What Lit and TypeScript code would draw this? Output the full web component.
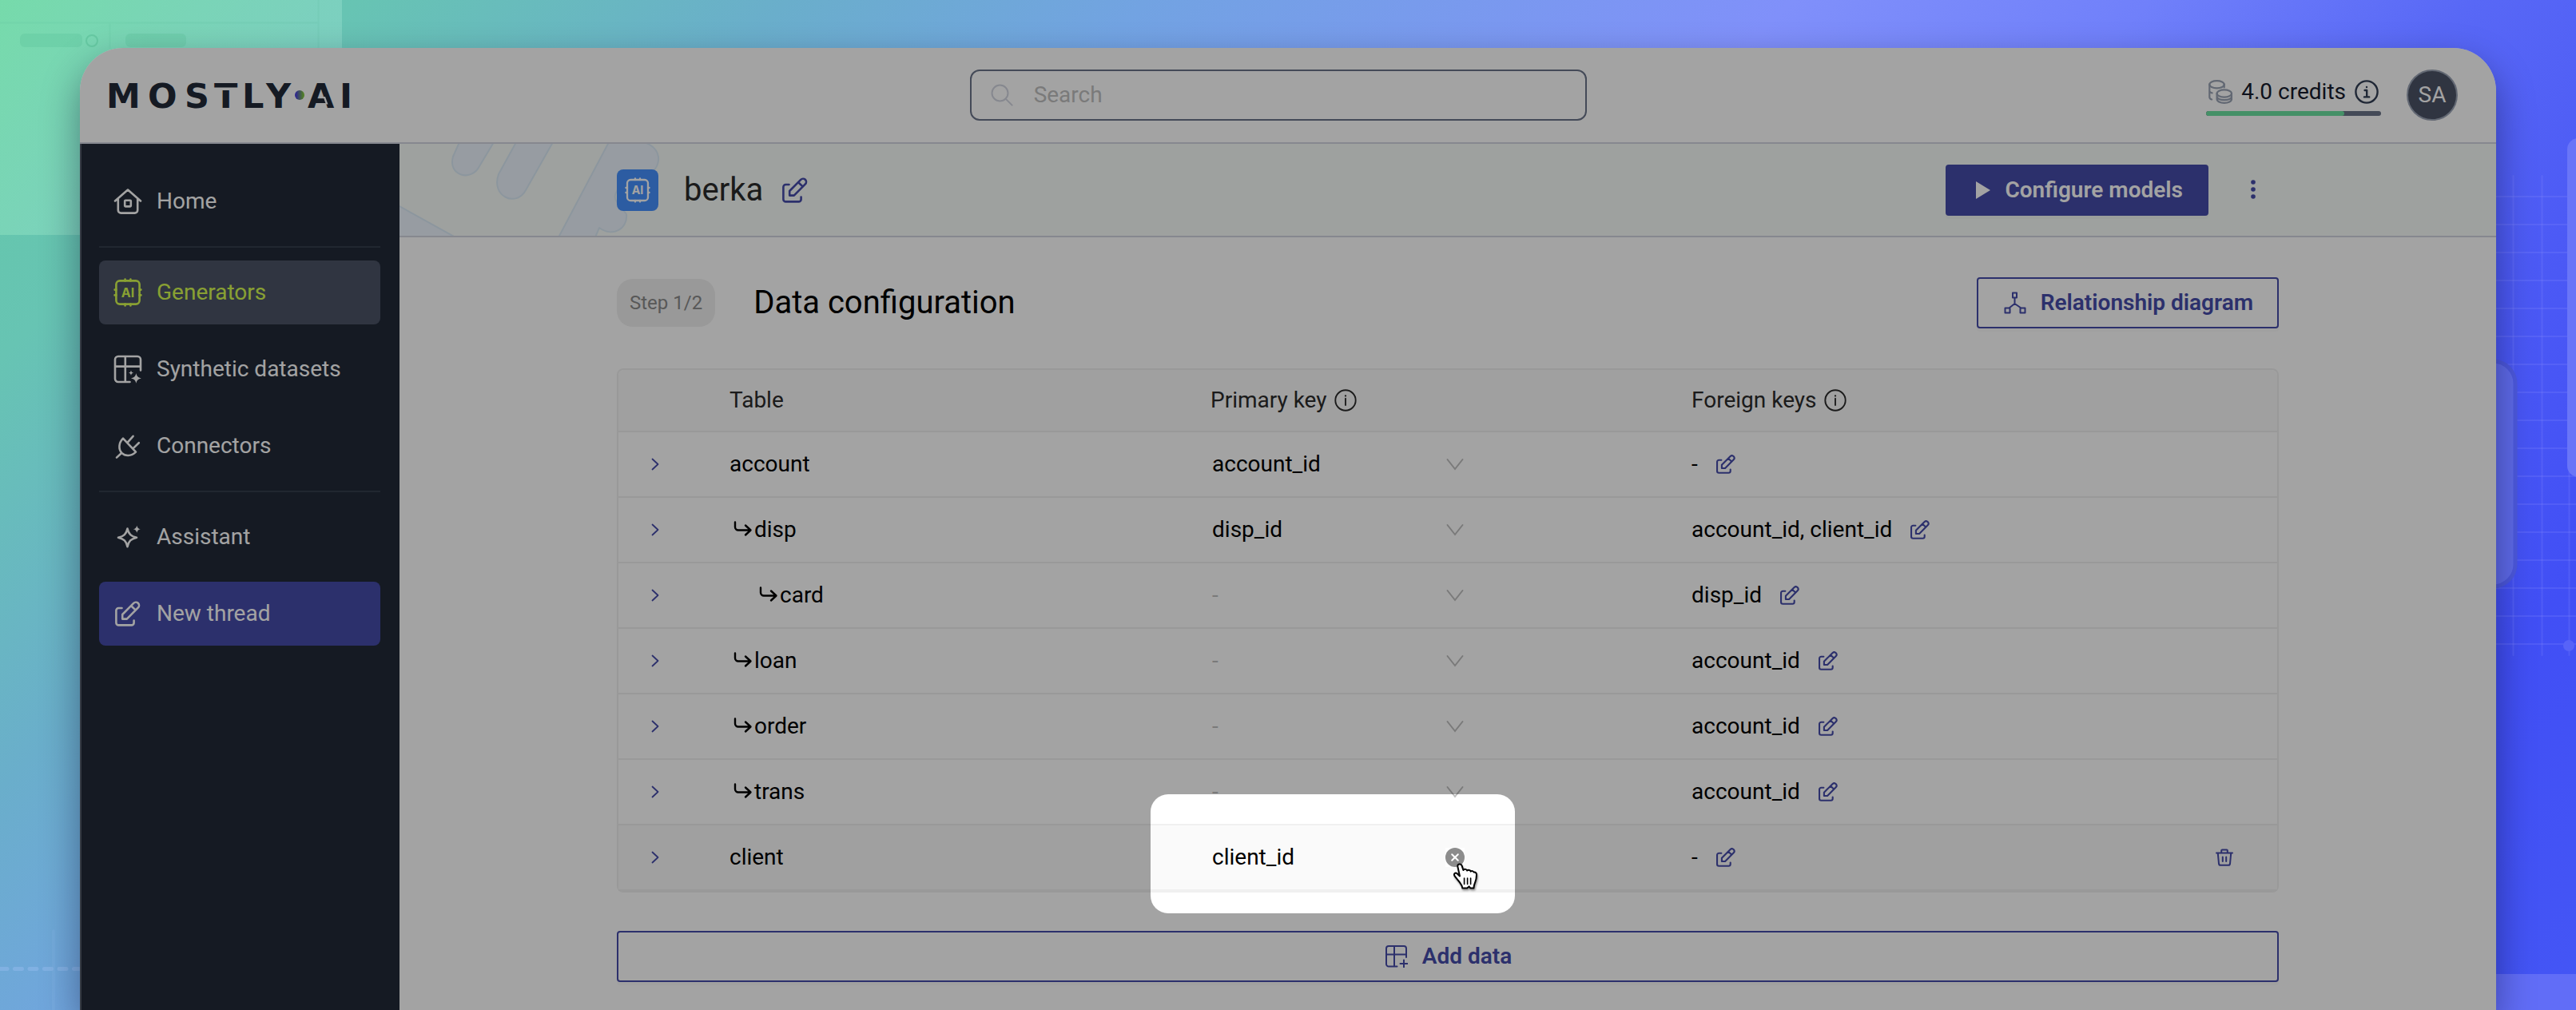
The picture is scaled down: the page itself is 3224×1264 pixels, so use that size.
import { LitElement, html, css, nothing } from "lit";
import { customElement, state } from "lit/decorators.js";

interface Row {
  name: string;
  level: number;
  primary: string;
  foreign: string;
}

const ROWS: Row[] = [
  { name: "account", level: 0, primary: "account_id", foreign: "-" },
  { name: "disp", level: 1, primary: "disp_id", foreign: "account_id, client_id" },
  { name: "card", level: 2, primary: "-", foreign: "disp_id" },
  { name: "loan", level: 1, primary: "-", foreign: "account_id" },
  { name: "order", level: 1, primary: "-", foreign: "account_id" },
  { name: "trans", level: 1, primary: "-", foreign: "account_id" },
  { name: "client", level: 0, primary: "client_id", foreign: "-" },
];

const iconHome = () => html`<svg class="i36" viewBox="0 0 36 36" aria-hidden="true">
  <path d="M2 17.5 18 3.5l16 14M5.8 15v14a3.6 3.6 0 0 0 3.6 3.6h17.2a3.6 3.6 0 0 0 3.6-3.6V15" />
  <rect x="14.2" y="16.8" width="7.6" height="7.6" rx="0.8" />
</svg>`;

const iconChip = () => html`<svg class="i36 chip" viewBox="0 0 36 36" aria-hidden="true">
  <rect x="3.4" y="3.4" width="29.2" height="29.2" rx="4.6" />
  <path d="M14.6 3.4V1.6M21.4 3.4V1.6M14.6 34.4v-1.8M21.4 34.4v-1.8M3.4 14.6H1.6M3.4 21.4H1.6M34.4 14.6h-1.8M34.4 21.4h-1.8" />
  <text x="18" y="24" text-anchor="middle">AI</text>
</svg>`;

const iconDatasets = () => html`<svg class="i36" viewBox="0 0 36 36" aria-hidden="true">
  <path d="M20.5 34H6a4 4 0 0 1-4-4V6a4 4 0 0 1 4-4h24a4 4 0 0 1 4 4v13.5M2 14.6h32M14.8 2v32" />
  <path class="solid" d="M28.4 23c.9 4 2.2 5.400 6.400 6.400-4.200 1-5.500 2.400-6.400 6.400-.9-4-2.200-5.400-6.400-6.400 4.200-1 5.500-2.400 6.400-6.400zM22 19.400c.5 2.100 1.200 2.700 3.200 3.200-2 .5-2.700 1.200-3.200 3.200-.5-2-1.200-2.700-3.200-3.200 2-.5 2.700-1.100 3.200-3.200z" />
</svg>`;

const iconPlug = () => html`<svg class="i36" viewBox="0 0 36 36" aria-hidden="true">
  <path d="M4 32.600l5.800-5.400M12 8.600 28 25.600C22 31.200 14.800 31.200 10.400 26.800 6 22.200 6.400 14.200 12 8.600zM18.200 13.200l6.400-7.400M25.200 20.600l6.600-6.400" />
</svg>`;

const iconSparkle = () => html`<svg class="i36" viewBox="0 0 36 36" aria-hidden="true">
  <path d="M17.500 7.500c1.600 7 4.300 9.700 11.500 11.300-7.200 1.600-9.900 4.300-11.500 11.400-1.600-7.100-4.300-9.800-11.500-11.400 7.200-1.600 9.900-4.300 11.500-11.300z" />
  <path class="solid" d="M29.300 3.800c.7 2.900 1.700 3.900 4.500 4.500-2.800.7-3.800 1.700-4.500 4.500-.7-2.800-1.700-3.800-4.500-4.500 2.800-.6 3.800-1.600 4.500-4.500z" />
</svg>`;

const iconEdit = (cls: string) => html`<svg class=${cls} viewBox="0 0 32 32" aria-hidden="true">
  <path d="M8.500 9H4.400a3 3 0 0 0-3 3v15.400a3 3 0 0 0 3 3h16.200a3 3 0 0 0 3-3V24.600" />
  <path d="M9.200 22.600v-5.600L23.200 2.900a3.900 3.900 0 0 1 5.700 5.500L14.800 22.600zM20.200 6.200l5.600 5.400" />
</svg>`;

const iconInfo = (cls: string) => html`<svg class=${cls} viewBox="0 0 30 30" aria-hidden="true">
  <circle cx="15" cy="15" r="13.600" />
  <path d="M12.600 13h2.600v8M12 21.400h6.200" class="serif" />
  <path d="M15 12.600v8.800" class="plain" />
  <circle class="solid" cx="15" cy="9" r="1.200" />
</svg>`;

const iconTableAdd = () => html`<svg class="i28" viewBox="0 0 28 28" aria-hidden="true">
  <path d="M14.500 26.500H4a3 3 0 0 1-3-3V4a3 3 0 0 1 3-3h19a3 3 0 0 1 3 3v11M1 11.500h25M11 1v25.500M23 18.500v9M18.500 23h9" />
</svg>`;

const iconDiagram = () => html`<svg class="i28" viewBox="0 0 28 28" aria-hidden="true">
  <path d="M11 1.500h5v6h-5zM1.500 20.500h6v6h-6zM20.500 20.500h6v6h-6zM13.500 7.500V15M13.500 15l-7 5.500M13.500 15l8 5.500" />
</svg>`;

const iconTrash = () => html`<svg class="trash" viewBox="0 0 24 24" aria-hidden="true">
  <path d="M2 6.500h20M8.200 6.200V3.400a1 1 0 0 1 1-1h5.600a1 1 0 0 1 1 1v2.800M3.800 6.800l1.200 13a2.200 2.200 0 0 0 2.200 2h9.600a2.200 2.200 0 0 0 2.200-2l1.200-13M9.800 11.500v5.500M14.200 11.500v5.500" />
</svg>`;

@customElement("app-root")
export class AppRoot extends LitElement {
  static styles = css`
    :host {
      display: block;
      font-family: Roboto, "Liberation Sans", sans-serif;
      font-size: 28px;
      line-height: 40px;
      color: #000;
    }
    * {
      box-sizing: border-box;
    }
    button,
    input,
    select {
      font: inherit;
      color: inherit;
      background: none;
      border: 0;
      margin: 0;
      padding: 0;
    }
    a {
      color: inherit;
      text-decoration: none;
    }
    svg {
      display: block;
      flex: none;
      fill: none;
      stroke: currentColor;
      stroke-width: 2;
      stroke-linejoin: round;
      stroke-linecap: round;
    }
    .solid {
      fill: currentColor;
      stroke: none;
    }
    .i36 {
      width: 36px;
      height: 36px;
      stroke-width: 2.6;
    }
    .i32 {
      width: 32px;
      height: 32px;
      stroke-width: 2.6;
    }
    .i28 {
      width: 28px;
      height: 28px;
    }
    .i24,
    .trash {
      width: 24px;
      height: 24px;
    }
    .i24 {
      stroke-width: 2.8;
    }
    .chip text {
      fill: currentColor;
      stroke: none;
      font: 700 16px Inter, sans-serif;
    }
    .page {
      position: relative;
      display: flex;
      flex-direction: column;
      min-height: 100vh;
      padding: 60px 100px 0;
      overflow: hidden;
      background: linear-gradient(
        135deg,
        #63c9a6 0%,
        #67c4b3 10%,
        #6aaecb 22%,
        #72a3e2 32%,
        #8090fa 50%,
        #7080fa 60%,
        #5868f6 69%,
        #4c5af5 78%,
        #414ff5 88%,
        #4456f5 100%
      );
    }
    .deco-left {
      position: absolute;
      left: 0;
      top: 0;
      width: 430px;
      height: 100%;
      stroke: none;
    }
    .deco-right {
      position: absolute;
      right: 0;
      top: 0;
      width: 120px;
      height: 100%;
    }
    .window {
      position: relative;
      z-index: 1;
      flex: 1;
      display: flex;
      flex-direction: column;
      overflow: hidden;
      border-radius: 54px 54px 0 0;
      background: #fff;
      box-shadow: 0 20px 48px rgba(0, 0, 30, 0.4);
    }
    .topbar {
      display: flex;
      align-items: center;
      justify-content: space-between;
      height: 120px;
      padding: 0 48px 0 32px;
      border-bottom: 2px solid #d2d5e0;
    }
    .logo {
      width: 306px;
      height: 40px;
      overflow: visible;
      stroke: none;
    }
    .logo text {
      fill: #212a38;
      font: 700 43px "DejaVu Sans", sans-serif;
    }
    .cut {
      fill: #fff;
    }
    .search {
      display: flex;
      align-items: center;
      gap: 26px;
      width: 772px;
      height: 64px;
      padding: 0 24px;
      border: 2px solid #6b748a;
      border-radius: 12px;
      color: #d2d5e0;
    }
    .search input {
      flex: 1;
      min-width: 0;
      color: #000;
      outline: none;
    }
    .search input::placeholder {
      color: #bfbfbf;
      opacity: 1;
    }
    .account {
      display: flex;
      align-items: center;
      gap: 32px;
    }
    .credits {
      display: flex;
      flex-direction: column;
      gap: 2px;
    }
    .credits-row {
      display: flex;
      align-items: center;
      gap: 11px;
      height: 44px;
      padding: 0 3px;
      color: #161b2c;
    }
    .coins {
      width: 30px;
      height: 30px;
      color: #9aa3b4;
      stroke-width: 2.2;
    }
    .info {
      width: 30px;
      height: 30px;
      color: #333f55;
      stroke-width: 2.4;
    }
    .info .plain,
    .info-th .serif {
      display: none;
    }
    .info-th {
      width: 28px;
      height: 28px;
    }
    .track {
      height: 6px;
      border-radius: 3px;
      background: #6b7489;
      overflow: hidden;
    }
    .fill {
      height: 6px;
      border-radius: 3px;
      background: #6ce1a1;
    }
    .avatar {
      width: 64px;
      height: 64px;
      border: 2px solid #9aa3b4;
      border-radius: 50%;
      background: #4b5366;
      color: #fff;
    }
    .body {
      flex: 1;
      display: flex;
    }
    .sidebar {
      width: 400px;
      flex: none;
      padding: 32px 24px 0 22px;
      border-left: 2px solid #545c69;
      background: #212a38;
      color: #fff;
    }
    .nav {
      display: flex;
      flex-direction: column;
      gap: 16px;
    }
    .nav-item {
      display: flex;
      align-items: center;
      gap: 18px;
      height: 80px;
      padding: 0 18px;
      border-radius: 8px;
    }
    .nav-item.active {
      background: #4b5366;
      color: #d7fb50;
    }
    .nav-item.primary {
      background: #454ba9;
    }
    .nav-item .i32 {
      margin: 0 2px;
    }
    .nav-line {
      height: 2px;
      background: #353e4c;
    }
    .main {
      flex: 1;
      min-width: 0;
    }
    .band {
      position: relative;
      height: 117px;
      border-bottom: 2px solid #d2d5e0;
      background: #f7fcf9;
    }
    .band-art {
      position: absolute;
      left: 0;
      top: 0;
      width: 340px;
      height: 115px;
      fill: #ecf5fd;
      stroke: #dcebf7;
    }
    .inner {
      position: relative;
      max-width: 2128px;
      margin: 0 auto;
      padding: 0 24px;
    }
    .band-row {
      display: flex;
      align-items: center;
      height: 115px;
      color: #2b2b2b;
    }
    .tile {
      display: grid;
      place-items: center;
      width: 52px;
      height: 52px;
      margin-right: 32px;
      border-radius: 8px;
      background: #4590fd;
      color: #fff;
    }
    .tile .i36 {
      width: 32px;
      height: 32px;
    }
    h1,
    h2 {
      margin: 0;
      font-size: 40px;
      line-height: 60px;
      font-weight: 400;
    }
    .link {
      color: #454ba9;
      cursor: pointer;
    }
    .band-row .link {
      margin-left: 24px;
    }
    .spacer {
      flex: 1;
    }
    .btn {
      display: flex;
      align-items: center;
      justify-content: center;
      gap: 18px;
      height: 64px;
      padding: 0 30px 0 32px;
      border: 2px solid #454ba9;
      border-radius: 4px;
      color: #454ba9;
      font-weight: 600;
      box-shadow: 0 4px 0 rgba(0, 0, 0, 0.02);
    }
    .btn.filled {
      padding: 0 30px 0 36px;
      background: #454ba9;
      color: #fff;
    }
    .play {
      width: 18px;
      height: 22px;
    }
    .band-row .kebab {
      display: grid;
      place-items: center;
      width: 64px;
      height: 64px;
      margin-left: 24px;
    }
    .title-row {
      display: flex;
      align-items: center;
      gap: 48px;
      margin-top: 50px;
    }
    .step {
      height: 60px;
      padding: 0 16px;
      border-radius: 20px;
      background: #f0f0f0;
      color: #8a8a8a;
      font-size: 24px;
      line-height: 60px;
    }
    table {
      width: 100%;
      margin: 50px 0 48px;
      table-layout: fixed;
      border: 2px solid #f0f0f0;
      border-radius: 8px;
      border-collapse: separate;
      border-spacing: 0;
    }
    .c-expand {
      width: 123px;
    }
    .c-data {
      width: 29%;
    }
    th,
    td {
      height: 82px;
      padding: 0 16px;
      border-bottom: 2px solid #f0f0f0;
      text-align: left;
      font-weight: 400;
    }
    th {
      height: 78px;
      background: #fafafa;
      color: #2b2b2b;
    }
    th:first-child {
      border-top-left-radius: 8px;
    }
    th:last-child {
      border-top-right-radius: 8px;
    }
    td:first-child {
      padding: 0 0 0 32px;
    }
    td:last-child {
      padding: 0 54px 0 0;
    }
    td:last-child .link {
      margin-left: auto;
    }
    .hover td {
      background: #fafafa;
    }
    .cell {
      display: flex;
      align-items: center;
      gap: 9px;
    }
    .name {
      display: flex;
      align-items: center;
    }
    .branch {
      width: 31px;
      height: 28px;
      stroke-width: 2.4;
    }
    .expand {
      width: 28px;
      height: 28px;
      stroke-width: 1.8;
    }
    td .link {
      display: block;
    }
    .fk {
      display: flex;
      align-items: center;
      gap: 23px;
    }
    .picker {
      display: grid;
      align-items: center;
      width: 318px;
    }
    .picker > * {
      grid-area: 1 / 1;
    }
    .picker select {
      appearance: none;
      width: 100%;
      height: 48px;
      padding-left: 2px;
    }
    .picker select.empty {
      color: #bfbfbf;
    }
    .arrow {
      width: 24px;
      height: 24px;
      justify-self: end;
      color: #bfbfbf;
      pointer-events: none;
      stroke-linejoin: miter;
    }
    .clear {
      justify-self: end;
      width: 24px;
      height: 24px;
      background: #fff;
    }
    .clear svg {
      width: 24px;
      height: 24px;
      stroke: #fff;
    }
    .focus-cell {
      position: relative;
    }
    .spotlight {
      position: absolute;
      z-index: 10;
      left: -59px;
      top: -39px;
      width: 456px;
      height: 149px;
      border-radius: 22px;
      box-shadow: 0 0 0 4000px rgba(0, 0, 0, 0.36);
      pointer-events: none;
    }
    .cursor {
      position: absolute;
      z-index: 11;
      left: 319px;
      top: 47px;
      width: 34px;
      height: 38px;
      overflow: visible;
      filter: drop-shadow(1px 2px 1px rgba(0, 0, 0, 0.4));
      pointer-events: none;
    }
    .wide {
      width: 100%;
      margin-bottom: 34px;
    }
  `;

  @state() private rows = ROWS;

  private pick(row: Row, e: Event) {
    const value = (e.target as HTMLSelectElement).value;
    this.rows = this.rows.map((r) => (r === row ? { ...r, primary: value } : r));
  }

  private renderBackdrop() {
    const ys = Array.from({ length: 17 }, (_, i) => 246 + i * 35);
    return html`
      <svg class="deco-left" aria-hidden="true">
        <defs>
          <linearGradient id="panel" x1="0" y1="0" x2="1" y2="0.6">
            <stop offset="0" stop-color="#83e6ae" stop-opacity="0.6" />
            <stop offset="1" stop-color="#9bdcd8" stop-opacity="0.4" />
          </linearGradient>
        </defs>
        <rect width="428" height="294" fill="url(#panel)" />
        <path d="M398.500 0v60M137.500 30v30M0 28.500h398" stroke="#4fae98" stroke-opacity="0.1" stroke-width="2" />
        <rect x="25" y="42" width="78" height="17" rx="6" fill="#5abf98" fill-opacity="0.3" />
        <rect x="157" y="42" width="76" height="17" rx="6" fill="#5abf98" fill-opacity="0.3" />
        <circle cx="115" cy="51" r="7" fill="none" stroke="#5abf98" stroke-opacity="0.6" stroke-width="2" />
        <path d="M0 1212.500h100" stroke="#8db8ea" stroke-opacity="0.6" stroke-width="5" stroke-dasharray="9 9.500" />
        <path d="M67 1165v100" stroke="#8db8ea" stroke-opacity="0.2" stroke-width="4" />
      </svg>
      <svg class="deco-right" aria-hidden="true">
        <g stroke="#8b92ff" stroke-width="2" stroke-opacity="0.2">
          <path d=${ys.map((y) => `M0 ${y}h120`).join("")} />
          <path d="M41.500 220v600M77.500 220v600M111.500 220v600" />
        </g>
        <circle cx="111" cy="808" r="7" fill="#5763f8" stroke="none" />
        <rect x="-80" y="452" width="124" height="282" rx="28" fill="#5f6bea" stroke="#4d59dd" stroke-width="5" />
        <rect x="109" y="173" width="60" height="424" rx="14" fill="#6975f8" stroke="none" />
        <rect y="1219" width="120" height="60" fill="#616df7" stroke="none" />
      </svg>
    `;
  }

  private renderTopbar() {
    return html`<header class="topbar">
      <a href="#home" aria-label="MOSTLY AI">
        <svg class="logo" viewBox="0 0 306 40">
          <defs>
            <linearGradient id="dot">
              <stop offset="0.1" stop-color="#4a3fe0" />
              <stop offset="0.9" stop-color="#7fc83a" />
            </linearGradient>
          </defs>
          <text y="36" x="1 53 99 136 171 201 253 293">MOSTLYAI</text>
          <rect class="cut" x="135" y="10.500" width="32" height="3.500" />
          <path class="cut" d="M272.500 22h2.500l3.500 9.500h-2.500z" />
          <circle cx="243" cy="20" r="6" fill="url(#dot)" />
        </svg>
      </a>
      <label class="search">
        <svg class="i28" viewBox="0 0 28 28" aria-hidden="true">
          <circle cx="11.500" cy="11.500" r="10" />
          <path d="M18.600 18.600l8 8" />
        </svg>
        <input type="search" placeholder="Search" aria-label="Search" />
      </label>
      <div class="account">
        <div class="credits">
          <div class="credits-row">
            <svg class="coins" viewBox="0 0 30 30" aria-hidden="true">
              <ellipse cx="10.500" cy="5.700" rx="9.200" ry="4.600" />
              <path d="M1.300 5.700v15.800c0 1.600.8 2.400 2.800 3M1.300 14c.4 1.200 1.600 2 3.200 2.400M19.700 5.700v3.600" />
              <ellipse cx="19.800" cy="17" rx="9.200" ry="4.600" />
              <path d="M10.600 17v7c0 2.800 4 4.800 9.200 4.800s9.200-2 9.200-4.800v-7M10.600 20.800c0 2.600 4 4.400 9.200 4.400s9.200-1.800 9.200-4.400" />
            </svg>
            <span>4.0 credits</span>
            ${iconInfo("info")}
          </div>
          <div class="track" role="progressbar" aria-label="Credits" aria-valuenow="79">
            <div class="fill" style="width:79%"></div>
          </div>
        </div>
        <button class="avatar">SA</button>
      </div>
    </header>`;
  }

  private renderSidebar() {
    return html`<aside class="sidebar">
      <nav class="nav">
        <a class="nav-item" href="#home">${iconHome()}Home</a>
        <div class="nav-line"></div>
        <a class="nav-item active" href="#generators">${iconChip()}Generators</a>
        <a class="nav-item" href="#datasets">${iconDatasets()}Synthetic datasets</a>
        <a class="nav-item" href="#connectors">${iconPlug()}Connectors</a>
        <div class="nav-line"></div>
        <a class="nav-item" href="#assistant">${iconSparkle()}Assistant</a>
        <a class="nav-item primary" href="#thread">${iconEdit("i32")}New thread</a>
      </nav>
    </aside>`;
  }

  private renderRow(row: Row) {
    const focused = row.name === "client";
    const options = row.primary === "-" ? ["-"] : [row.primary, "-"];
    return html`<tr class=${focused ? "hover" : ""}>
      <td>
        <button class="link" aria-label="Expand ${row.name}">
          <svg class="expand" viewBox="0 0 28 28"><path d="M10.500 7.500l7 6.500-7 6.500" /></svg>
        </button>
      </td>
      <td>
        <span class="name" style="padding-left:${Math.max(0, row.level - 1) * 32}px">
          ${row.level
            ? html`<svg class="branch" viewBox="0 0 31 28" aria-hidden="true">
                <path d="M7 4.500v6a4 4 0 0 0 4 4h15M20 8.500l6.500 6-6.500 6" />
              </svg>`
            : nothing}${row.name}
        </span>
      </td>
      <td class=${focused ? "focus-cell" : ""}>
        <div class="picker">
          <select
            class=${row.primary === "-" ? "empty" : ""}
            aria-label="Primary key of ${row.name}"
            @change=${(e: Event) => this.pick(row, e)}
          >
            ${options.map((o) => html`<option ?selected=${o === row.primary}>${o}</option>`)}
          </select>
          ${focused
            ? html`<button class="clear" aria-label="Clear primary key">
                <svg viewBox="0 0 24 24">
                  <circle cx="12" cy="12" r="12" fill="#8c8c8c" stroke="none" />
                  <path d="M8.200 8.200l7.600 7.600M15.800 8.200l-7.600 7.600" />
                </svg>
              </button>`
            : html`<svg class="arrow" viewBox="0 0 24 24" aria-hidden="true">
                <path d="M2.500 6l9.500 12 9.500-12" />
              </svg>`}
        </div>
        ${focused
          ? html`<div class="spotlight"></div>
              <svg class="cursor" viewBox="0 0 34 38" aria-hidden="true">
                <path
                  d="M6.400 4.600C5.600 1.400 10.400 0 11.600 3.400L13.400 9c1.200-1.800 4.200-1.400 4.800.6 1.400-1.400 4-.8 4.600 1 1.200-1 3-.6 3.800 1 2.200-.4 3.400 1 3.400 3.200 0 4.600-.6 6.800-2 10-.8 2-1.400 3.400-1.600 6.800h-4l-1.800-2.200-2.400 2.200H12.400c-.4-2.800-1.600-4.800-3.400-7.200L3 16.800C.6 13.800 3.200 11.600 5.600 13.200L9 16.400z"
                  fill="#fff"
                  stroke="#000"
                />
                <path d="M14.600 19v7.500M18.600 19v7.500M22.600 19v7.500" stroke="#000" stroke-width="1.600" />
              </svg>`
          : nothing}
      </td>
      <td>
        <span class="fk">
          ${row.foreign}
          <button class="link" aria-label="Edit foreign keys of ${row.name}">${iconEdit("i24")}</button>
        </span>
      </td>
      <td>
        ${focused ? html`<button class="link" aria-label="Delete ${row.name}">${iconTrash()}</button>` : nothing}
      </td>
    </tr>`;
  }

  render() {
    return html`<div class="page">
      ${this.renderBackdrop()}
      <div class="window">
        ${this.renderTopbar()}
        <div class="body">
          ${this.renderSidebar()}
          <main class="main">
            <section class="band">
              <svg class="band-art" viewBox="0 0 340 115" aria-hidden="true">
                <path
                  d="M75-2 67 16C60 40 90 48 100 28L118-2zM146-2 124 38C114 66 146 80 158 58L192-2zM262-2 199 117h46l5-12c16 12 36 2 34-17l-8-10c-8-8-8-14-2-22l26-12c30-8 32-38 6-46zM-2 77 70 117H-2z"
                />
              </svg>
              <div class="inner band-row">
                <span class="tile">${iconChip()}</span>
                <h1>berka</h1>
                <button class="link" aria-label="Rename">${iconEdit("i32")}</button>
                <span class="spacer"></span>
                <button class="btn filled">
                  <svg class="play" viewBox="0 0 18 22" aria-hidden="true"><path class="solid" d="M0 0v22l18-11z" /></svg>
                  Configure models
                </button>
                <button class="link kebab" aria-label="More actions">
                  <svg class="i28" viewBox="0 0 28 28">
                    <circle class="solid" cx="14" cy="4" r="2.800" />
                    <circle class="solid" cx="14" cy="13" r="2.800" />
                    <circle class="solid" cx="14" cy="22" r="2.800" />
                  </svg>
                </button>
              </div>
            </section>
            <section class="inner">
              <div class="title-row">
                <span class="step">Step 1/2</span>
                <h2>Data configuration</h2>
                <span class="spacer"></span>
                <button class="btn">${iconDiagram()}Relationship diagram</button>
              </div>
              <table>
                <colgroup>
                  <col class="c-expand" />
                  <col class="c-data" />
                  <col class="c-data" />
                  <col class="c-data" />
                  <col />
                </colgroup>
                <thead>
                  <tr>
                    <th></th>
                    <th>Table</th>
                    <th><span class="cell">Primary key ${iconInfo("info-th")}</span></th>
                    <th><span class="cell">Foreign keys ${iconInfo("info-th")}</span></th>
                    <th></th>
                  </tr>
                </thead>
                <tbody>
                  ${this.rows.map((r) => this.renderRow(r))}
                </tbody>
              </table>
              <button class="btn wide">${iconTableAdd()}Add data</button>
            </section>
          </main>
        </div>
      </div>
    </div>`;
  }
}
